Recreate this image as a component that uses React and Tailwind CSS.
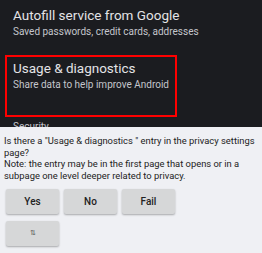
export default function App() {
  return (
    <div className="w-[262px] h-[253px] overflow-hidden bg-[#eff0f4] font-['Roboto',sans-serif]">
      {/* Settings screen */}
      <div className="h-[127px] overflow-hidden bg-[#1b1c20] pt-[7px]">
        <div className="pl-[13px]">
          <div className="text-[13.5px] leading-[17px] text-[#e3e3e6]">Autofill service from Google</div>
          <div className="mt-[1px] text-[10px] leading-[13px] text-[#c4c6cc]">Saved passwords, credit cards, addresses</div>
        </div>
        <div className="ml-[5px] mt-[17px] w-[172px] h-[62px] border-2 border-[#ff0000] pl-[6px] pt-[3px]">
          <div className="text-[13.5px] leading-[17px] text-[#e3e3e6]">Usage &amp; diagnostics</div>
          <div className="mt-[1px] text-[10px] leading-[13px] text-[#c4c6cc]">Share data to help improve Android</div>
        </div>
        <div className="pl-[13px] mt-[3px] text-[10px] leading-[13px] text-[#c4c6cc]">Security</div>
      </div>

      {/* Question panel */}
      <div className="px-[4px] pt-[8px]">
        <p className="text-[9.4px] leading-[11.5px] text-[#222]">
          Is there a "Usage &amp; diagnostics " entry in the privacy settings page?
          <br />
          Note: the entry may be in the first page that opens or in a subpage one level deeper related to privacy.
        </p>
        <div className="mt-[8px] pl-[2px] flex flex-col gap-[7px]">
          <div className="flex gap-[5px]">
            {['Yes', 'No', 'Fail'].map(t => (
              <button
                key={t}
                className="w-[53px] h-[25px] rounded-[2px] bg-[#d6d7d8] shadow-[0_1px_2px_rgba(0,0,0,0.3)] text-[10px] font-medium text-[#222]"
              >
                {t}
              </button>
            ))}
          </div>
          <div className="flex">
            <button className="w-[53px] h-[25px] rounded-[2px] bg-[#d6d7d8] shadow-[0_1px_2px_rgba(0,0,0,0.3)] text-[7px] text-[#555]">
              ⇅
            </button>
          </div>
        </div>
      </div>
    </div>
  )
}
